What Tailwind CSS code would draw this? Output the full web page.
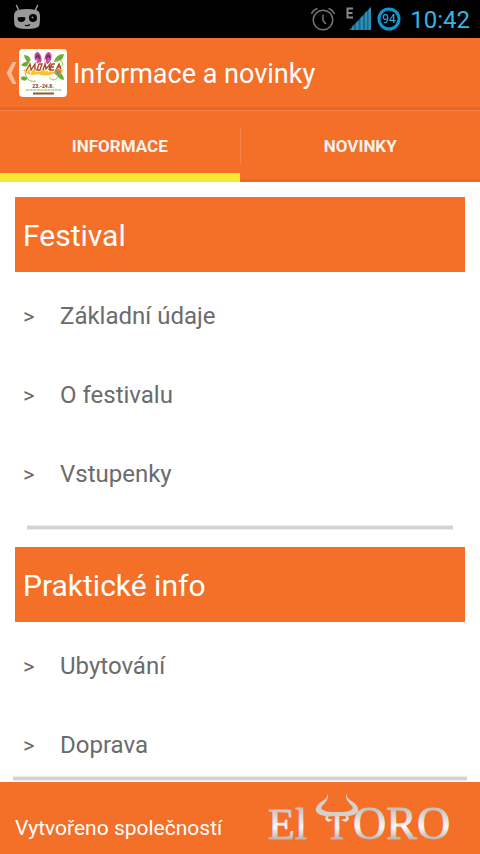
<!DOCTYPE html>
<html lang="cs">
<head>
    <meta charset="UTF-8">
    <meta name="viewport" content="width=device-width, initial-scale=1.0">
    <title>Informace a novinky</title>
    <script src="https://cdn.jsdelivr.net/npm/@tailwindcss/browser@4"></script>
</head>
<body class="h-screen flex flex-col bg-white font-['Roboto',sans-serif]">
    <!-- Status bar -->
    <div class="h-[38px] shrink-0 bg-black flex items-center justify-between pl-3 pr-[10px]">
        <svg class="w-[30px] h-[30px]" viewBox="0 0 30 30" aria-hidden="true">
            <path d="M4.500 1.500L7 7M25.500 1.500L23 7" stroke="#999" stroke-width="1.500" stroke-linecap="round"/>
            <path d="M6 6Q15 4 24 6Q28 7 28 12Q28 20 27 22Q25 25 15 25Q5 25 3 22Q2 20 2 12Q2 7 6 6Z" fill="#999"/>
            <path d="M5.500 13.500Q10 12.500 13.500 13.500Q13 18 9.500 18Q5.500 18 5.500 13.500Z" fill="#000"/>
            <circle cx="21" cy="14" r="4" fill="#000"/>
            <circle cx="20.500" cy="13.500" r="1" fill="#999"/>
            <path d="M13 21Q15 22.500 18 20.500" stroke="#000" stroke-width="1.300" fill="none"/>
        </svg>
        <div class="flex items-center text-[#33b5e5]">
            <svg class="w-[26px] h-[26px]" viewBox="0 0 26 26" fill="none" stroke="#777" stroke-width="1.500" aria-hidden="true">
                <circle cx="13" cy="14" r="9.800"/>
                <path d="M13 8.500V14.500L16 18M1.500 8Q3 4 7.500 2.500M24.500 8Q23 4 18.500 2.500"/>
            </svg>
            <svg class="w-[27px] h-[26px] ml-[10px]" viewBox="0 0 27 26" aria-hidden="true">
                <path d="M3 24L25 1V24Z" fill="#1d6788"/>
                <path d="M6 24V21L8 19V24ZM10 24V17L12.500 14.500V24ZM14.500 24V12L17 9.500V24ZM19 24V7L21 5V24ZM22.500 24V3.500L25 1V24Z" fill="#2b8fba"/>
                <path d="M7 2.500H1.500V11.500H7M1.500 7H6.500" stroke="#888" stroke-width="2" fill="none"/>
            </svg>
            <svg class="w-[24px] h-[24px] ml-1" viewBox="0 0 24 24" aria-hidden="true">
                <circle cx="12" cy="12" r="10" fill="none" stroke="#0d99cf" stroke-width="3"/>
                <text x="12" y="16" text-anchor="middle" fill="#33b5e5" font-size="12">94</text>
            </svg>
            <span class="ml-[9px] pt-[2px] text-2xl leading-9">10:42</span>
        </div>
    </div>

    <!-- Action bar -->
    <header class="h-[72px] shrink-0 bg-[#f46f27] border-b-3 border-[#e46727] flex items-center pl-[6px]">
        <button type="button" class="flex items-center pt-px" aria-label="Zpět">
            <svg class="w-[11px] h-[24px]" viewBox="0 0 11 24" aria-hidden="true">
                <path d="M6.500 1H10.500L5.500 12L10.500 23H6.500L.5 12Z" fill="#fbb995"/>
            </svg>
            <svg class="w-[48px] h-[48px] ml-[2px]" viewBox="0 0 48 48" aria-hidden="true">
                <rect width="48" height="48" rx="4" fill="#fffefa"/>
                <path d="M2 16Q7 10 12 14Q8 20 2 16ZM5 6Q12 6 12 14Q6 13 5 6ZM35 13Q37 5 45 5Q44 13 35 13ZM38 23Q44 23 45 31Q38 30 38 23ZM9 29Q2 25 2 30Q6 34 9 29Z" fill="#6cab35"/>
                <path d="M12 24Q4 20 7 27T17 32M36 12Q46 10 43 17M30 28Q34 34 39 28" stroke="#91c95a" stroke-width="1" fill="none"/>
                <path d="M4 21Q14 15 24 20T44 20Q45 25 34 25Q26 28 19 25Q9 28 4 21Z" fill="#f7c52b"/>
                <ellipse cx="19" cy="9" rx="3.400" ry="6" fill="#d8438c" transform="rotate(-12 19 9)"/>
                <ellipse cx="29" cy="9" rx="3.400" ry="6" fill="#d8438c" transform="rotate(12 29 9)"/>
                <path d="M16.500 9L19 6L21 10M27 10L29 6L31.500 9" stroke="#50367a" stroke-width="1.300" fill="none"/>
                <path d="M18 11L19 12M29 12L30 11M19 4H20M28 4H29" stroke="#58bccf" stroke-width="1.500"/>
                <path d="M7 22L11 15L12 21L16 15V21M18 21L20 15H23L21 21ZM24 21L26 15L27 20L31 15L30 21M36 15H33L31 21H35M32 18H35M37 21L40 15L42 20M38 18H41" stroke="#fff" stroke-width="3" fill="none"/>
                <path d="M7 22L11 15L12 21L16 15V21M18 21L20 15H23L21 21ZM24 21L26 15L27 20L31 15L30 21M36 15H33L31 21H35M32 18H35M37 21L40 15L42 20M38 18H41" stroke="#aa4d2b" stroke-width="1.400" fill="none"/>
                <circle cx="39" cy="23" r="3.500" fill="#ef8a22"/>
                <path d="M36 21L41 23L39 28Z" fill="#46a99a"/>
                <text x="24" y="39" text-anchor="middle" font-size="5" font-weight="900" fill="#91482d">23.-24.8.</text>
                <path d="M7 41H43" stroke="#79b765" stroke-width="1.200" stroke-dasharray="3 .6"/>
                <path d="M14 44.500H35" stroke="#94573d" stroke-width="2"/>
            </svg>
        </button>
        <h1 class="ml-[6px] pt-[3px] text-[27px] leading-8 text-white">Informace a novinky</h1>
    </header>

    <!-- Tabs -->
    <nav class="h-[72px] shrink-0 bg-[#f46f27] border-t border-[#f68449] flex text-[17px] font-bold text-[#f5f2f0]">
        <button type="button" class="flex-1 pt-[10px] border-b-9 border-[#fae732]">INFORMACE</button>
        <span class="w-px h-9 mt-[17px] bg-[#f68449]"></span>
        <button type="button" class="flex-1 pt-1 border-b-3 border-[#e96a25]">NOVINKY</button>
    </nav>

    <!-- Content -->
    <main class="flex-1 min-h-0 overflow-y-auto [scrollbar-width:none] px-[15px] pt-[15px] text-2xl text-[#6b6b6b]">
        <section>
            <h2 class="h-[75px] flex items-center px-2 pt-[2px] bg-[#f46f27] text-white text-[30px]">Festival</h2>
            <ul class="pt-1">
                <li><a href="#" class="h-[79px] flex items-center pl-2"><span class="w-[37px] pt-[2px] text-[22px]">&gt;</span>Základní údaje</a></li>
                <li><a href="#" class="h-[79px] flex items-center pl-2"><span class="w-[37px] pt-[2px] text-[22px]">&gt;</span>O festivalu</a></li>
                <li><a href="#" class="h-[79px] flex items-center pl-2"><span class="w-[37px] pt-[2px] text-[22px]">&gt;</span>Vstupenky</a></li>
            </ul>
            <hr class="mx-3 mt-3 mb-4 h-[5px] border-y border-[#ececec] bg-[#d2d2d2] bg-clip-padding">
        </section>
        <section class="pt-px">
            <h2 class="h-[75px] flex items-center px-2 pt-[2px] bg-[#f46f27] text-white text-[30px]">Praktické info</h2>
            <ul class="pt-1">
                <li><a href="#" class="h-[79px] flex items-center pl-2"><span class="w-[37px] pt-[2px] text-[22px]">&gt;</span>Ubytování</a></li>
                <li><a href="#" class="h-[79px] flex items-center pl-2"><span class="w-[37px] pt-[2px] text-[22px]">&gt;</span>Doprava</a></li>
            </ul>
        </section>
    </main>

    <!-- Footer -->
    <footer class="shrink-0">
        <hr class="mx-[13px] mb-px h-[5px] border-y border-[#ececec] bg-[#d2d2d2] bg-clip-padding">
        <div class="h-[72px] bg-[#f46f27] flex items-center justify-between pl-[15px] pr-[26px]">
            <p class="pt-[22px] text-[21px] text-white">Vytvořeno společností</p>
            <svg class="w-[188px] h-[60px]" viewBox="0 0 188 60" role="img" aria-label="El Toro">
                <defs>
                    <linearGradient id="silver" gradientUnits="userSpaceOnUse" x1="0" y1="20" x2="0" y2="52">
                        <stop offset="0" stop-color="#c4bfbb"/>
                        <stop offset=".6" stop-color="#fafafa"/>
                        <stop offset="1" stop-color="#b5b0ad"/>
                    </linearGradient>
                </defs>
                <g fill="url(#silver)" stroke="url(#silver)" stroke-width=".8" font-family="Liberation Serif, serif" font-size="44">
                    <text x="2" y="51">El</text>
                    <text x="71" y="51" font-size="38" text-anchor="middle">T</text>
                    <text x="87" y="51" font-size="46">ORO</text>
                </g>
                <path d="M62 5Q62 10 55 14Q49 18 50 23Q52 28 62 28H80Q90 28 92 23Q93 18 87 14Q80 10 80 5Q79 11 84 16Q89 20 85 22Q82 24 77 24H65Q60 24 57 22Q53 20 58 16Q63 11 62 5Z" fill="#d4d0cd"/>
                <path d="M59 30L67 32L62 34ZM83 30L75 32L80 34Z" fill="#eee"/>
            </svg>
        </div>
    </footer>
</body>
</html>
